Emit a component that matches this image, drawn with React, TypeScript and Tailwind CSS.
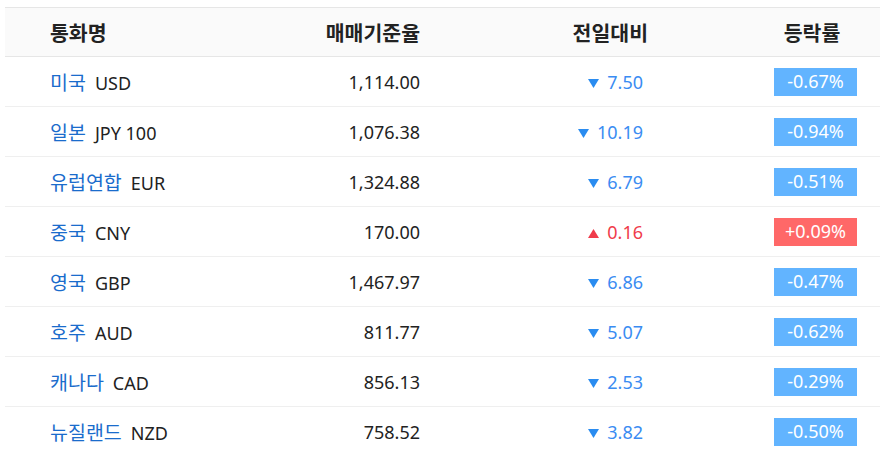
const rows = [
  { name: "미국", code: "USD", rate: "1,114.00", diff: "7.50", up: false, pct: "-0.67%" },
  { name: "일본", code: "JPY 100", rate: "1,076.38", diff: "10.19", up: false, pct: "-0.94%" },
  { name: "유럽연합", code: "EUR", rate: "1,324.88", diff: "6.79", up: false, pct: "-0.51%" },
  { name: "중국", code: "CNY", rate: "170.00", diff: "0.16", up: true, pct: "+0.09%" },
  { name: "영국", code: "GBP", rate: "1,467.97", diff: "6.86", up: false, pct: "-0.47%" },
  { name: "호주", code: "AUD", rate: "811.77", diff: "5.07", up: false, pct: "-0.62%" },
  { name: "캐나다", code: "CAD", rate: "856.13", diff: "2.53", up: false, pct: "-0.29%" },
  { name: "뉴질랜드", code: "NZD", rate: "758.52", diff: "3.82", up: false, pct: "-0.50%" },
];

const cols = "grid grid-cols-[265px_150px_228px_1fr] items-center";

function Arrow({ up }: { up: boolean }) {
  return (
    <svg width="11" height="9" viewBox="0 0 11 9" className="mr-[8px] mt-[1px]">
      {up ? (
        <path d="M5.5 0L11 9H0Z" fill="#f03b4b" />
      ) : (
        <path d="M0 0H11L5.5 9Z" fill="#2a8cf0" />
      )}
    </svg>
  );
}

export default function App() {
  return (
    <div
      className="w-[880px] h-[452px] overflow-hidden bg-white pt-[7px] pl-[5px]"
      style={{ fontFamily: '"Noto Sans", "Noto Sans CJK KR", sans-serif' }}
    >
      <div className={`${cols} h-[50px] pt-[2px] bg-[#fafafa] border-t border-b border-[#e6e6e6] text-[20.5px] font-bold text-[#222]`}>
        <div className="pl-[45px]">통화명</div>
        <div className="text-right">매매기준율</div>
        <div className="text-right">전일대비</div>
        <div className="pl-[126px]">
          <div className="w-[76px] text-center">등락률</div>
        </div>
      </div>
      {rows.map((r) => (
        <div key={r.code} className={`${cols} h-[50px] pt-[2px] border-b border-[#efefef] text-[18px]`}>
          <div className="pl-[45px]">
            <span className="text-[#1a6ccc] text-[19.5px]">{r.name}</span>
            <span className="text-[#222] ml-[9px]">{r.code}</span>
          </div>
          <div className="text-right text-[#222]">{r.rate}</div>
          <div className={`flex items-center justify-end pr-[5px] ${r.up ? "text-[#f03b4b]" : "text-[#3a8cf2]"}`}>
            <Arrow up={r.up} />
            {r.diff}
          </div>
          <div className="pl-[126px]">
            <div
              className={`w-[83px] h-[28px] -mt-[2px] flex items-center justify-center text-white ${r.up ? "bg-[#ff6868]" : "bg-[#62b4ff]"}`}
            >
              {r.pct}
            </div>
          </div>
        </div>
      ))}
    </div>
  );
}
